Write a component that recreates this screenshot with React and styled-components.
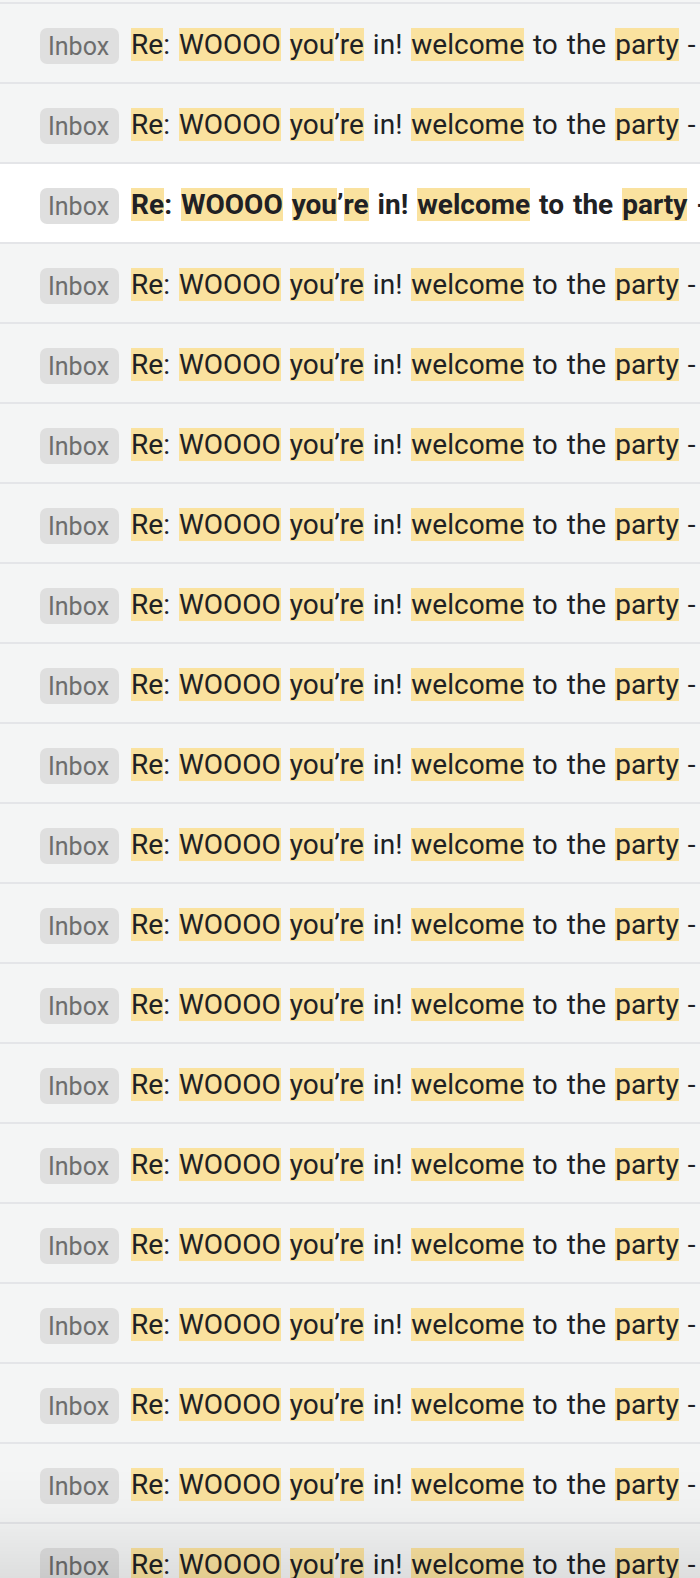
import styled, { createGlobalStyle } from "styled-components";

const GlobalStyle = createGlobalStyle`
  html, body {
    margin: 0;
    padding: 0;
    background: #f4f5f5;
    font-family: Roboto, "Liberation Sans", sans-serif;
  }
`;

const List = styled.div`
  padding-top: 2px;
  overflow: hidden;
  height: 1578px;
  box-sizing: border-box;
`;

const Row = styled.div`
  display: flex;
  align-items: center;
  gap: 12px;
  height: 80px;
  padding: 2px 0 0 40px;
  box-sizing: border-box;
  border-top: 2px solid #e4e5e8;
  background: ${({ $selected }) => ($selected ? "#ffffff" : "#f4f5f5")};
  white-space: nowrap;
  overflow: hidden;
`;

const Badge = styled.span`
  flex: none;
  display: inline-flex;
  align-items: center;
  height: 36px;
  padding: 0 10px 0 8px;
  border-radius: 7px;
  background: #dfdfdf;
  color: #6d6d6d;
  font-size: 25px;
  margin-top: 4px;
`;

const Subject = styled.span`
  font-size: 28px;
  word-spacing: 2px;
  color: #202124;
  font-weight: ${({ $bold }) => ($bold ? 700 : 400)};
`;

const Mark = styled.mark`
  background: #fae29f;
  color: inherit;
`;

const Shade = styled.div`
  position: fixed;
  left: 0;
  right: 0;
  bottom: 0;
  height: 110px;
  pointer-events: none;
  background: linear-gradient(
    to bottom,
    rgba(0, 0, 0, 0) 0%,
    rgba(0, 0, 0, 0.02) 40%,
    rgba(0, 0, 0, 0.09) 100%
  );
`;

const rows = Array.from({ length: 20 }, (_, i) => i);

const App = () => (
  <>
    <GlobalStyle />
    <List>
      {rows.map((i) => (
        <Row key={i} $selected={i === 2}>
          <Badge>Inbox</Badge>
          <Subject $bold={i === 2}>
            <Mark>Re</Mark>: <Mark>WOOOO</Mark> <Mark>you</Mark>’<Mark>re</Mark>{" "}
            in! <Mark>welcome</Mark> to the <Mark>party</Mark> -
          </Subject>
        </Row>
      ))}
    </List>
    <Shade />
  </>
);

export default App;
